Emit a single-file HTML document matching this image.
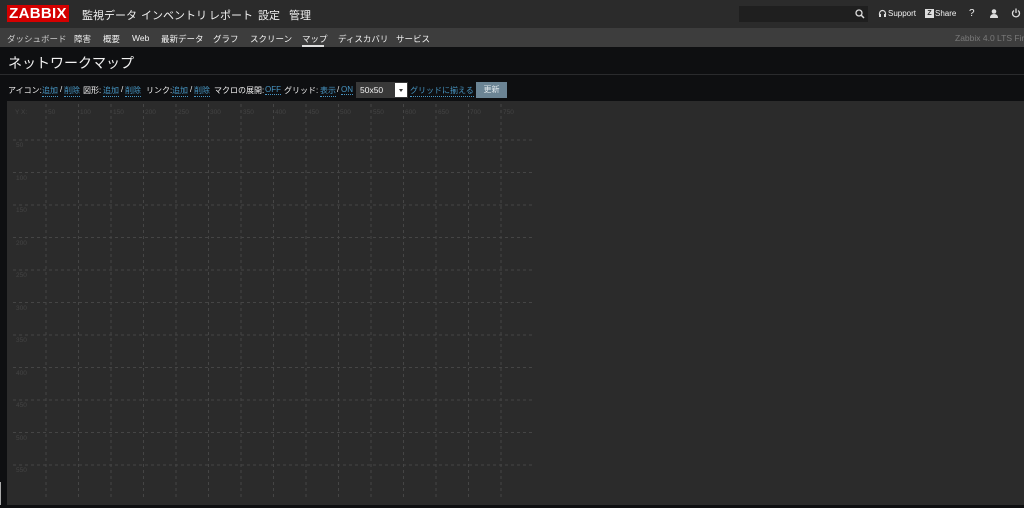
<!DOCTYPE html>
<html><head><meta charset="utf-8"><style>
*{margin:0;padding:0;box-sizing:border-box}
body{width:1024px;height:508px;background:#0e0f11;font-family:"Liberation Sans","Noto Sans CJK JP",sans-serif;overflow:hidden;position:relative;color:#f2f2f2}
.top{position:absolute;left:0;top:0;width:1024px;height:28px;background:#2b2b2b}
.logo{position:absolute;left:7px;top:5px;width:62px;height:17px;background:#d40000;color:#fff;font-size:15px;font-weight:bold;line-height:17px;text-align:center;letter-spacing:0.3px}
.mm{position:absolute;top:7px;font-size:11px;color:#f2f2f2;white-space:nowrap}
.sub{position:absolute;left:0;top:28px;width:1024px;height:19px;background:#3d3d3d}
.sm{position:absolute;top:33px;font-size:8.5px;color:#f2f2f2;white-space:nowrap}
.srch{position:absolute;left:739px;top:6px;width:129px;height:16px;background:#1f1f1f}
.ti{position:absolute;top:9px;font-size:8px;color:#f2f2f2}
h1{position:absolute;left:8px;top:53px;font-size:14px;font-weight:normal;color:#f2f2f2}
.hr{position:absolute;left:0;top:74px;width:1024px;height:1px;background:#2a2b2d}
.c{position:absolute;top:85px;font-size:8px;color:#f2f2f2;white-space:nowrap}
a.c{color:#4796c4;text-decoration:none;border-bottom:1px dotted #4796c4}
.sel{position:absolute;left:356px;top:82px;width:52px;height:16px;background:#383838;font-size:8.5px;padding:3px 4px;color:#f2f2f2}
.sel b{position:absolute;right:1px;top:1px;width:12px;height:14px;background:#fff}
.sel i{position:absolute;right:5px;top:7px;border:2px solid transparent;border-top:3px solid #333}
.btn{position:absolute;left:476px;top:82px;width:31px;height:16px;background:#6b8494;color:#dfe6ea;font-size:8px;text-align:center;line-height:16px}
.map{position:absolute;left:7px;top:101px;width:1017px;height:404px;background:#2b2b2b}
</style></head><body>
<div class="top"></div>
<div class="logo">ZABBIX</div>
<div class="mm" style="left:82px">監視データ</div>
<div class="mm" style="left:141px">インベントリ</div>
<div class="mm" style="left:209px">レポート</div>
<div class="mm" style="left:258px">設定</div>
<div class="mm" style="left:289px">管理</div>
<div class="srch"></div>
<svg style="position:absolute;left:855px;top:9px" width="10" height="10"><circle cx="4" cy="4" r="3" fill="none" stroke="#ddd" stroke-width="1.3"/><line x1="6" y1="6" x2="9" y2="9" stroke="#ddd" stroke-width="1.5"/></svg>
<svg style="position:absolute;left:878px;top:9px" width="9" height="9"><path d="M1.5 6V4.5a3 3 0 0 1 6 0V6" fill="none" stroke="#ddd" stroke-width="1.2"/><rect x="1" y="5" width="2" height="3" fill="#ddd"/><rect x="6" y="5" width="2" height="3" fill="#ddd"/></svg>
<div class="ti" style="left:888px">Support</div>
<div style="position:absolute;left:925px;top:9px;width:9px;height:9px;background:#ddd;color:#2b2b2b;font-size:7px;font-weight:bold;line-height:9px;text-align:center">Z</div>
<div class="ti" style="left:935px">Share</div>
<div class="ti" style="left:969px;font-size:10px;top:8px">?</div>
<svg style="position:absolute;left:989px;top:9px" width="10" height="9"><circle cx="5" cy="2.5" r="2.3" fill="#ddd"/><path d="M1 9 Q1 5 5 5 Q9 5 9 9Z" fill="#ddd"/></svg>
<svg style="position:absolute;left:1011px;top:8px" width="10" height="10"><path d="M3 2.5A3.5 3.5 0 1 0 7 2.5" fill="none" stroke="#ddd" stroke-width="1.3"/><line x1="5" y1="0.5" x2="5" y2="5" stroke="#ddd" stroke-width="1.3"/></svg>
<div class="sub"></div>
<div class="sm" style="left:7px;color:#ccc">ダッシュボード</div>
<div class="sm" style="left:74px">障害</div>
<div class="sm" style="left:103px">概要</div>
<div class="sm" style="left:132px">Web</div>
<div class="sm" style="left:161px">最新データ</div>
<div class="sm" style="left:213px">グラフ</div>
<div class="sm" style="left:250px">スクリーン</div>
<div class="sm" style="left:302px">マップ</div>
<div style="position:absolute;left:302px;top:45px;width:22px;height:2px;background:#ddd"></div>
<div class="sm" style="left:338px">ディスカバリ</div>
<div class="sm" style="left:396px">サービス</div>
<div class="sm" style="left:955px;color:#7a7a7a">Zabbix 4.0 LTS First</div>
<h1>ネットワークマップ</h1>
<div class="hr"></div>
<span class="c" style="left:8px">アイコン:</span>
<a class="c" style="left:42px">追加</a><span class="c" style="left:60px">/</span><a class="c" style="left:64px">削除</a>
<span class="c" style="left:83px">図形:</span>
<a class="c" style="left:103px">追加</a><span class="c" style="left:121px">/</span><a class="c" style="left:125px">削除</a>
<span class="c" style="left:146px">リンク:</span>
<a class="c" style="left:172px">追加</a><span class="c" style="left:190px">/</span><a class="c" style="left:194px">削除</a>
<span class="c" style="left:214px">マクロの展開:</span>
<a class="c" style="left:265px">OFF</a>
<span class="c" style="left:284px">グリッド:</span>
<a class="c" style="left:320px">表示</a><span class="c" style="left:337px">/</span><a class="c" style="left:341px">ON</a>
<div class="sel">50x50<b></b><i></i></div>
<a class="c" style="left:410px">グリッドに揃える</a>
<div class="btn">更新</div>
<div class="map"></div>
<div style="position:absolute;left:0;top:482px;width:1px;height:23px;background:#aaa"></div>
<svg style="position:absolute;left:0;top:0" width="1024" height="508" font-family="Liberation Sans" font-size="6.5" fill="#444">
<g stroke="#454545" stroke-width="1" stroke-dasharray="3,3">
<line x1="46" y1="104" x2="46" y2="497"/><line x1="78.5" y1="104" x2="78.5" y2="497"/><line x1="111" y1="104" x2="111" y2="497"/><line x1="143.5" y1="104" x2="143.5" y2="497"/><line x1="176" y1="104" x2="176" y2="497"/><line x1="208.5" y1="104" x2="208.5" y2="497"/><line x1="241" y1="104" x2="241" y2="497"/><line x1="273.5" y1="104" x2="273.5" y2="497"/><line x1="306" y1="104" x2="306" y2="497"/><line x1="338.5" y1="104" x2="338.5" y2="497"/><line x1="371" y1="104" x2="371" y2="497"/><line x1="403.5" y1="104" x2="403.5" y2="497"/><line x1="436" y1="104" x2="436" y2="497"/><line x1="468.5" y1="104" x2="468.5" y2="497"/><line x1="501" y1="104" x2="501" y2="497"/>
<line x1="13" y1="140" x2="533" y2="140"/><line x1="13" y1="172.5" x2="533" y2="172.5"/><line x1="13" y1="205" x2="533" y2="205"/><line x1="13" y1="237.5" x2="533" y2="237.5"/><line x1="13" y1="270" x2="533" y2="270"/><line x1="13" y1="302.5" x2="533" y2="302.5"/><line x1="13" y1="335" x2="533" y2="335"/><line x1="13" y1="367.5" x2="533" y2="367.5"/><line x1="13" y1="400" x2="533" y2="400"/><line x1="13" y1="432.5" x2="533" y2="432.5"/><line x1="13" y1="465" x2="533" y2="465"/>
</g>
<text x="15" y="114">Y X:</text>
<text x="48" y="114">50</text><text x="80" y="114">100</text><text x="113" y="114">150</text><text x="145" y="114">200</text><text x="178" y="114">250</text><text x="210" y="114">300</text><text x="243" y="114">350</text><text x="275" y="114">400</text><text x="308" y="114">450</text><text x="340" y="114">500</text><text x="373" y="114">550</text><text x="405" y="114">600</text><text x="438" y="114">650</text><text x="470" y="114">700</text><text x="503" y="114">750</text>
<text x="16" y="147">50</text><text x="16" y="180">100</text><text x="16" y="212">150</text><text x="16" y="245">200</text><text x="16" y="277">250</text><text x="16" y="310">300</text><text x="16" y="342">350</text><text x="16" y="375">400</text><text x="16" y="407">450</text><text x="16" y="440">500</text><text x="16" y="472">550</text>
</svg>
</body></html>
